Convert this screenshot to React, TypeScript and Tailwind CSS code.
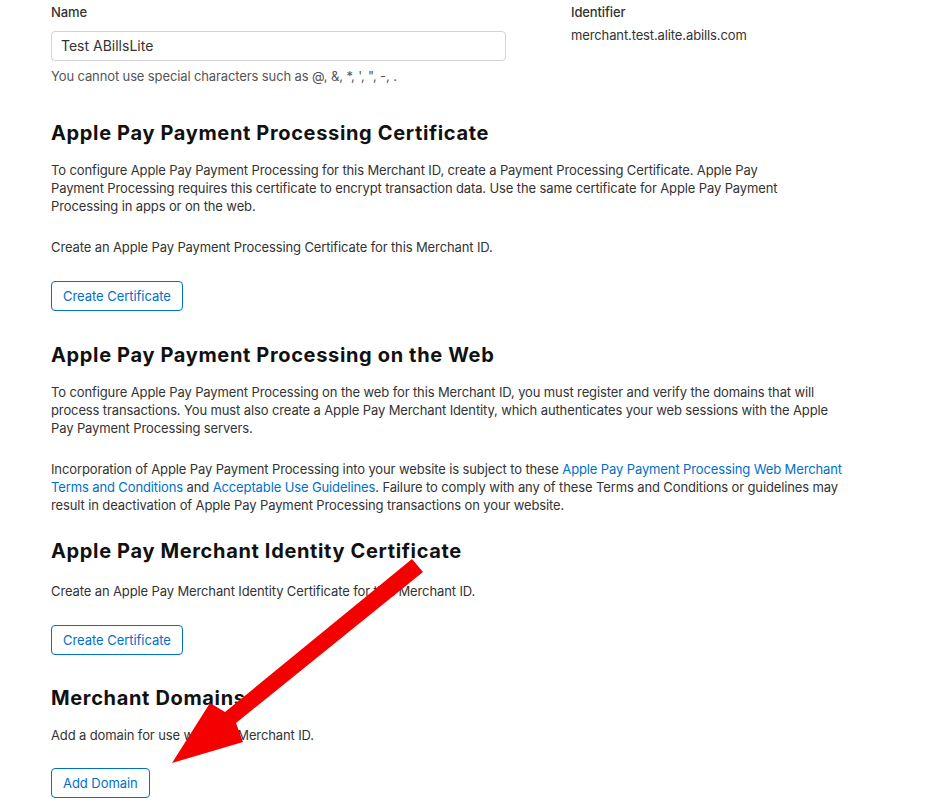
import React from 'react';

const font = { fontFamily: 'Inter, "Noto Sans", sans-serif' };

function OutlineButton({ label }: { label: string }) {
  return (
    <button className="h-[30px] px-[11px] border border-[#0070c9] rounded-[4px] text-[13px] tracking-[-0.05px] text-[#0070c9] bg-white leading-none">
      {label}
    </button>
  );
}

function Heading({ children }: { children: React.ReactNode }) {
  return <h2 className="text-[20px] leading-[24px] font-bold tracking-[0.65px] text-[#111]">{children}</h2>;
}

export default function App() {
  return (
    <div style={font} className="relative w-[952px] h-[808px] bg-white overflow-hidden text-[13px] tracking-[-0.12px] text-[#333] leading-[18px]">
      <div className="pl-[51px] pt-[3px] w-[860px]">
        <div className="flex">
          <div className="w-[520px]">
            <div className="text-[13px] text-[#333] font-medium leading-[18px]">Name</div>
            <div className="mt-[10px] w-[455px] h-[30px] border border-[#d2d2d7] rounded-[4px] flex items-center px-[9px] text-[14px] tracking-normal text-[#333]">
              Test ABillsLite
            </div>
            <div className="mt-[6px] text-[#555]">You cannot use special characters such as @, &amp;, *, ', ", -, .</div>
          </div>
          <div>
            <div className="text-[13px] font-medium">Identifier</div>
            <div className="mt-[5px]">merchant.test.alite.abills.com</div>
          </div>
        </div>

        <div className="mt-[36px]">
          <Heading>Apple Pay Payment Processing Certificate</Heading>
          <p className="mt-[16px] w-[760px]">
            To configure Apple Pay Payment Processing for this Merchant ID, create a Payment Processing Certificate. Apple Pay Payment Processing requires this certificate to encrypt transaction data. Use the same certificate for Apple Pay Payment Processing in apps or on the web.
          </p>
          <p className="mt-[23px]">Create an Apple Pay Payment Processing Certificate for this Merchant ID.</p>
          <div className="mt-[25px]">
            <OutlineButton label="Create Certificate" />
          </div>
        </div>

        <div className="mt-[32px]">
          <Heading>Apple Pay Payment Processing on the Web</Heading>
          <p className="mt-[16px] w-[800px]">
            To configure Apple Pay Payment Processing on the web for this Merchant ID, you must register and verify the domains that will process transactions. You must also create a Apple Pay Merchant Identity, which authenticates your web sessions with the Apple Pay Payment Processing servers.
          </p>
          <p className="mt-[23px] w-[800px]">
            Incorporation of Apple Pay Payment Processing into your website is subject to these{' '}
            <span className="text-[#0070c9]">Apple Pay Payment Processing Web Merchant Terms and Conditions</span> and{' '}
            <span className="text-[#0070c9]">Acceptable Use Guidelines</span>. Failure to comply with any of these Terms and Conditions or guidelines may result in deactivation of Apple Pay Payment Processing transactions on your website.
          </p>
        </div>

        <div className="mt-[25px]">
          <Heading>Apple Pay Merchant Identity Certificate</Heading>
          <p className="mt-[19px]">Create an Apple Pay Merchant Identity Certificate for this Merchant ID.</p>
          <div className="mt-[25px]">
            <OutlineButton label="Create Certificate" />
          </div>
        </div>

        <div className="mt-[31px]">
          <Heading>Merchant Domains</Heading>
          <p className="mt-[16px]">Add a domain for use with this Merchant ID.</p>
          <div className="mt-[24px]">
            <OutlineButton label="Add Domain" />
          </div>
        </div>
      </div>

      <svg className="absolute inset-0 pointer-events-none" width="952" height="808" viewBox="0 0 952 808">
        <polygon
          fill="#f50000"
          points="412,559 423,572 236,723 243,742 172,763 210,703 225,712"
        />
      </svg>
    </div>
  );
}
